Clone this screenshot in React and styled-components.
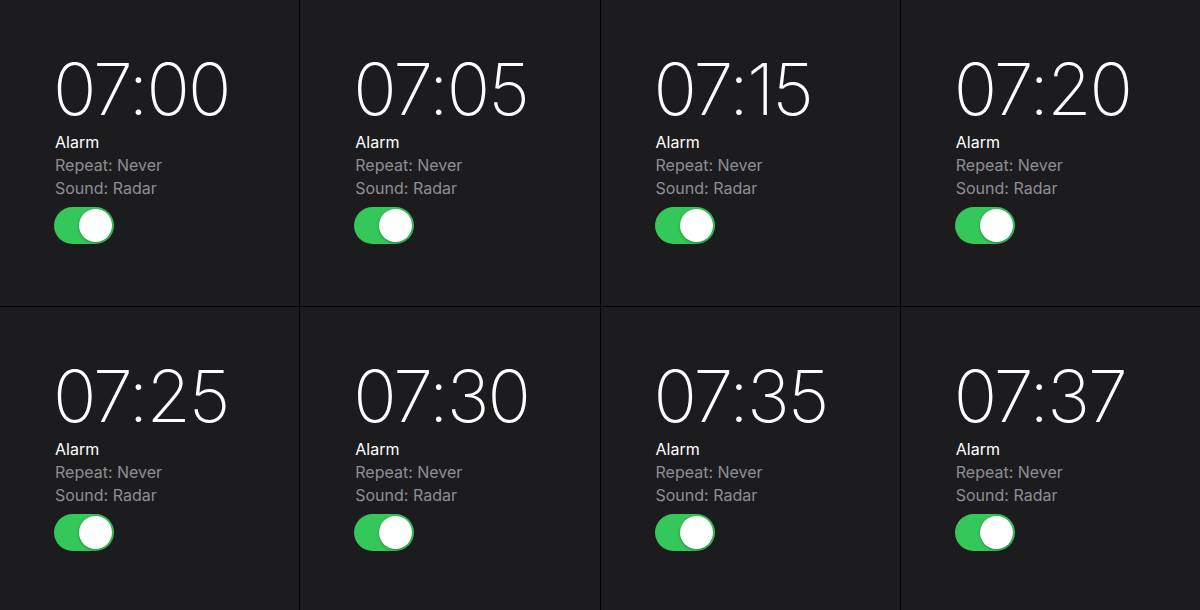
import React from 'react';
import styled, { createGlobalStyle } from 'styled-components';

const GlobalStyle = createGlobalStyle`
  html, body {
    margin: 0;
    padding: 0;
    background: #000;
    overflow: hidden;
  }
`;

const Board = styled.div`
  display: grid;
  grid-template-columns: repeat(4, 1fr);
  grid-auto-rows: 306px;
  gap: 1px;
  background: #000;
  width: 1200px;
  height: 610px;
  overflow: hidden;
  font-family: Inter, "Noto Sans", sans-serif;
`;

const Card = styled.div`
  background: #1c1c1e;
  padding: 52px 0 0 55px;
  display: flex;
  flex-direction: column;
  align-items: flex-start;
`;

const Time = styled.div`
  margin-left: -2px;
  font-size: 72px;
  font-weight: 200;
  line-height: 74px;
  color: #fff;
  letter-spacing: -2px;
`;

const Title = styled.div`
  margin-top: 5px;
  font-size: 16px;
  line-height: 23px;
  color: #fff;
`;

const Meta = styled.div`
  font-size: 16px;
  line-height: 23px;
  color: #8e8e93;
`;

const Toggle = styled.div`
  margin-top: 7px;
  margin-left: -1px;
  width: 60px;
  height: 37px;
  border-radius: 19px;
  background: #34c759;
  box-sizing: border-box;
  padding: 2px;
  display: flex;
  justify-content: ${(p) => (p.on ? 'flex-end' : 'flex-start')};
`;

const Knob = styled.div`
  width: 33px;
  height: 33px;
  border-radius: 50%;
  background: #fff;
  box-shadow: 0 1px 3px rgba(0, 0, 0, 0.3);
`;

const alarms = ['07:00', '07:05', '07:15', '07:20', '07:25', '07:30', '07:35', '07:37'];

const App = () => {
  return (
    <>
      <GlobalStyle />
      <Board>
        {alarms.map((t) => (
          <Card key={t}>
            <Time>{t}</Time>
            <Title>Alarm</Title>
            <Meta>Repeat: Never</Meta>
            <Meta>Sound: Radar</Meta>
            <Toggle on>
              <Knob />
            </Toggle>
          </Card>
        ))}
      </Board>
    </>
  );
};

export default App;
